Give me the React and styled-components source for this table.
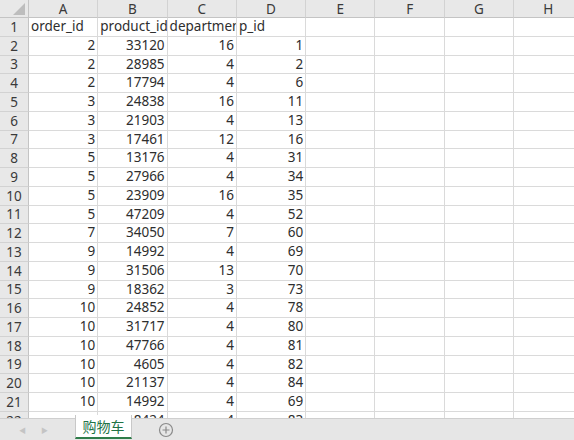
import styled, { createGlobalStyle } from 'styled-components';

const Global = createGlobalStyle`
  html, body {
    margin: 0;
    padding: 0;
    background: #fff;
  }
  body {
    font-family: "Noto Sans", "Noto Sans CJK SC", sans-serif;
    color: #2e2e2e;
  }
`;

const COLS = ['A', 'B', 'C', 'D', 'E', 'F', 'G', 'H'];
const HEAD = ['order_id', 'product_id', 'department_id', 'p_id'];
const ROWS = [
  [2, 33120, 16, 1],
  [2, 28985, 4, 2],
  [2, 17794, 4, 6],
  [3, 24838, 16, 11],
  [3, 21903, 4, 13],
  [3, 17461, 12, 16],
  [5, 13176, 4, 31],
  [5, 27966, 4, 34],
  [5, 23909, 16, 35],
  [5, 47209, 4, 52],
  [7, 34050, 7, 60],
  [9, 14992, 4, 69],
  [9, 31506, 13, 70],
  [9, 18362, 3, 73],
  [10, 24852, 4, 78],
  [10, 31717, 4, 80],
  [10, 47766, 4, 81],
  [10, 4605, 4, 82],
  [10, 21137, 4, 84],
  [10, 14992, 4, 69],
  [10, 8424, 4, 83],
];

const Window = styled.div`
  width: 574px;
  height: 440px;
  display: flex;
  flex-direction: column;
  overflow: hidden;
`;

const GridArea = styled.div`
  flex: 1;
  overflow: hidden;
`;

const Grid = styled.div`
  display: grid;
  grid-template-columns: 29px repeat(8, 69.3px);
  grid-template-rows: 18px;
  grid-auto-rows: 18.75px;
  font-size: 13.5px;
`;

const Corner = styled.div`
  background: #e8e8e8;
  border-right: 1px solid #c4c4c4;
  border-bottom: 1px solid #c4c4c4;
  box-sizing: border-box;
  display: flex;
  align-items: flex-end;
  justify-content: flex-end;
  padding: 0 3px 2px 0;
`;

const Triangle = styled.div`
  width: 0;
  height: 0;
  border-left: 12px solid transparent;
  border-bottom: 12px solid #bdbdbd;
`;

const ColHead = styled.div`
  background: #e8e8e8;
  border-right: 1px solid #d2d2d2;
  border-bottom: 1px solid #c4c4c4;
  box-sizing: border-box;
  display: flex;
  align-items: center;
  justify-content: center;
  color: #3a3a3a;
  font-size: 13.5px;
`;

const RowHead = styled.div`
  background: #e8e8e8;
  border-right: 1px solid #c4c4c4;
  border-bottom: 1px solid #d2d2d2;
  box-sizing: border-box;
  display: flex;
  align-items: center;
  justify-content: center;
  color: #3a3a3a;
`;

const Cell = styled.div`
  border-right: 1px solid #dadada;
  border-bottom: 1px solid #dadada;
  box-sizing: border-box;
  display: flex;
  align-items: center;
  justify-content: ${(p) => (p.$num ? 'flex-end' : 'flex-start')};
  padding: 0 2px 0 2px;
  white-space: nowrap;
  overflow: hidden;
  line-height: 1;
`;

const TabBar = styled.div`
  height: 22px;
  flex: none;
  background: #e6e6e6;
  border-top: 1px solid #cfcfcf;
  box-sizing: border-box;
  display: flex;
  align-items: flex-start;
`;

const Arrows = styled.div`
  width: 75px;
  height: 21px;
  display: flex;
  align-items: center;
  padding-left: 19px;
  gap: 15px;
  box-sizing: border-box;
  color: #c4c4c4;
  font-size: 7px;
`;

const SheetTab = styled.div`
  margin-top: -4px;
  width: 57px;
  height: 24px;
  background: #fff;
  border-left: 1px solid #c8c8c8;
  border-right: 1px solid #c8c8c8;
  border-bottom: 2px solid #2f7d4a;
  box-sizing: border-box;
  display: flex;
  align-items: center;
  justify-content: center;
  color: #217346;
  font-family: "Noto Sans CJK SC", sans-serif;
  font-size: 14px;
`;

const AddButton = styled.div`
  margin-left: 26px;
  height: 21px;
  display: flex;
  align-items: center;
`;

export default function App() {
  return (
    <Window>
      <Global />
      <GridArea>
        <Grid>
          <Corner>
            <Triangle />
          </Corner>
          {COLS.map((c) => (
            <ColHead key={c}>{c}</ColHead>
          ))}
          <RowHead>1</RowHead>
          {COLS.map((c, i) => (
            <Cell key={c}>{HEAD[i] || ''}</Cell>
          ))}
          {ROWS.map((r, ri) => [
            <RowHead key={'h' + ri}>{ri + 2}</RowHead>,
            ...COLS.map((c, i) => (
              <Cell key={c + ri} $num>
                {r[i] !== undefined ? r[i] : ''}
              </Cell>
            )),
          ])}
        </Grid>
      </GridArea>
      <TabBar>
        <Arrows>
          <span>◀</span>
          <span>▶</span>
        </Arrows>
        <SheetTab>购物车</SheetTab>
        <AddButton>
          <svg width="16" height="16" viewBox="0 0 16 16">
            <circle cx="8" cy="8" r="6.5" fill="none" stroke="#8a8a8a" strokeWidth="1.2" />
            <path d="M8 4.5v7M4.5 8h7" stroke="#8a8a8a" strokeWidth="1.2" />
          </svg>
        </AddButton>
      </TabBar>
    </Window>
  );
}
